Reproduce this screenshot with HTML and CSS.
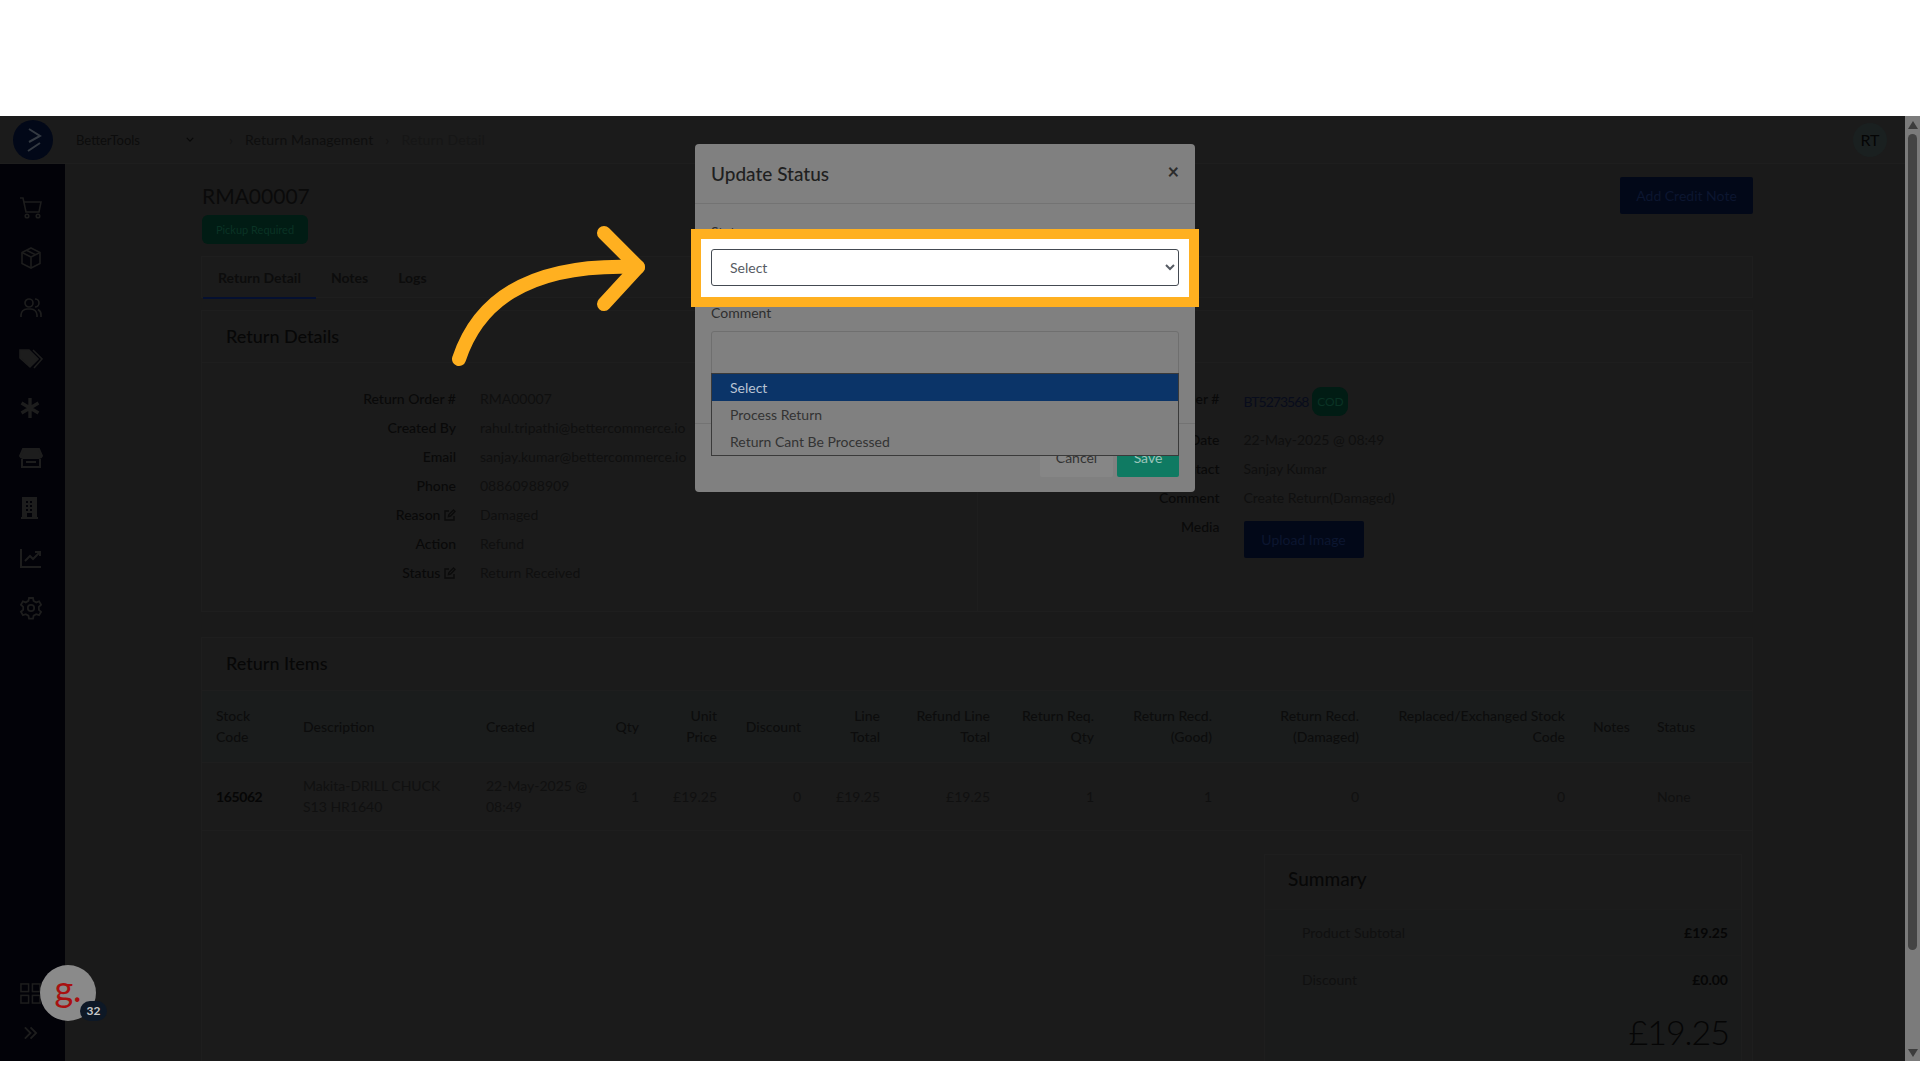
FILE: index.html
```html
<!DOCTYPE html>
<html lang="en">

<head>
    <meta charset="UTF-8">
    <meta name="viewport" content="width=device-width, initial-scale=1.0">
    <title>Return Detail</title>
    <link rel="stylesheet" href="styles.css">
</head>

<body>
    <div class="band-top"></div>

    <div class="app">
        <div class="page">
            <!-- Top bar -->
            <header class="topbar">
                <div class="logo">
                    <svg viewBox="0 0 40 40" width="40" height="40" fill="none" stroke="#343a42" stroke-width="2">
                        <path d="M16 9l11 7-11 6" />
                        <path d="M27 23l-12 8" />
                    </svg>
                </div>
                <div class="store-select">
                    <span>BetterTools</span>
                    <svg viewBox="0 0 10 6" width="8" height="5" fill="none" stroke="#0a0a0a" stroke-width="1.6">
                        <path d="M1 1l4 4 4-4" />
                    </svg>
                </div>
                <nav class="crumbs">
                    <span class="crumb-sep">›</span>
                    <span>Return Management</span>
                    <span class="crumb-sep">›</span>
                    <span class="crumb-current">Return Detail</span>
                </nav>
                <div class="avatar">RT</div>
            </header>

            <div class="workspace">
                <!-- Sidebar -->
                <aside class="sidebar">
                    <svg class="side-icon" viewBox="0 0 24 24" fill="none" stroke-width="1.6">
                        <path d="M1 2h3l3 14h13l2-10H5" />
                        <circle cx="8" cy="20" r="1.8" />
                        <circle cx="19" cy="20" r="1.8" />
                    </svg>
                    <svg class="side-icon" viewBox="0 0 24 24" fill="none" stroke-width="1.6">
                        <path d="M12 2l9 4.500v11L12 22l-9-4.500v-11z" />
                        <path d="M3 6.500l9 4.500 9-4.500M12 11v11M7.500 4.200l9 4.600" />
                    </svg>
                    <svg class="side-icon" viewBox="0 0 24 24" fill="none" stroke-width="1.7">
                        <circle cx="10" cy="7" r="4" />
                        <path d="M2 21v-2a6 6 0 0 1 6-6h4a6 6 0 0 1 6 6v2M16 3a4 4 0 0 1 0 8M19 13.500a6 6 0 0 1 3 5.500v2" />
                    </svg>
                    <svg class="side-icon icon-tags" viewBox="0 0 24 24" fill="none" stroke-width="1.6">
                        <path class="solid" d="M1 3h9l9 9-8 8-10-9z" />
                        <path d="M14 3l9 9-8 9" />
                    </svg>
                    <svg class="side-icon" viewBox="0 0 24 24" fill="none" stroke-width="3.4">
                        <path d="M11 2v20M2.500 7l17 10M19.500 7l-17 10" />
                    </svg>
                    <svg class="side-icon" viewBox="0 0 24 24" fill="none" stroke-width="2">
                        <path class="solid" d="M4 3h16l3 7a3 3 0 0 1-3 2H4a3 3 0 0 1-3-2z" />
                        <path d="M3 13v8h18v-8M7 16h10" />
                    </svg>
                    <svg class="side-icon" viewBox="0 0 24 24" stroke-width="0">
                        <path class="solid" fill-rule="evenodd" d="M3 1h15v20h1v2H2v-2h1zM7 5v2h2V5zm4 0v2h2V5zM7 9v2h2V9zm4 0v2h2V9zm-4 4v2h2v-2zm4 0v2h2v-2zm-3 4v4h5v-4z" />
                    </svg>
                    <svg class="side-icon" viewBox="0 0 24 24" fill="none" stroke-width="2">
                        <path d="M2 3v18h20M6 15l5-5 3 3 6-6M16 6h5v4" />
                    </svg>
                    <svg class="side-icon" viewBox="0 0 24 24" fill="none" stroke-width="1.8">
                        <circle cx="12" cy="12" r="3.200" />
                        <path d="M10 2h4l.6 3 2.600 1.400 2.900-1 2 3.400-2.300 2 .1 3 2.200 2-2 3.400-2.900-1-2.600 1.500-.6 2.900h-4l-.6-3-2.600-1.400-2.900 1-2-3.400 2.300-2v-3l-2.300-2 2-3.400 2.900 1 2.600-1.500z" />
                    </svg>
                    <div class="side-bottom">
                        <svg class="grid-icon" viewBox="0 0 22 22" fill="none" stroke-width="1.6">
                            <rect x="1" y="1" width="8" height="8" />
                            <rect x="13" y="1" width="8" height="8" />
                            <rect x="1" y="13" width="8" height="8" />
                            <rect x="13" y="13" width="8" height="8" />
                        </svg>
                        <svg class="expand-icon" viewBox="0 0 16 14" fill="none" stroke-width="2">
                            <path d="M2 1l6 6-6 6M8 1l6 6-6 6" />
                        </svg>
                    </div>
                </aside>

                <!-- Main content -->
                <main class="content">
                    <div class="page-head">
                        <div class="page-title">
                            <h1>RMA00007</h1>
                            <span class="status-pill">Pickup Required</span>
                        </div>
                        <button class="btn-navy btn-credit">Add Credit Note</button>
                    </div>

                    <div class="card tabs">
                        <span class="tab tab-active">Return Detail</span>
                        <span class="tab">Notes</span>
                        <span class="tab">Logs</span>
                    </div>

                    <section class="card details">
                        <h2 class="card-title">Return Details</h2>
                        <div class="details-body">
                            <dl class="detail-col col-left">
                                <div class="detail-row"><dt>Return Order #</dt><dd>RMA00007</dd></div>
                                <div class="detail-row"><dt>Created By</dt><dd>rahul.tripathi@bettercommerce.io</dd></div>
                                <div class="detail-row"><dt>Email</dt><dd>sanjay.kumar@bettercommerce.io</dd></div>
                                <div class="detail-row"><dt>Phone</dt><dd>08860988909</dd></div>
                                <div class="detail-row"><dt>Reason <svg class="edit-icon" viewBox="0 0 12 12" fill="none" stroke-width="1.4"><path d="M10 7v4H1V2h4M4.500 7.500l.4-2L9.500 1l1.500 1.500L6.500 7z" /></svg></dt><dd>Damaged</dd></div>
                                <div class="detail-row"><dt>Action</dt><dd>Refund</dd></div>
                                <div class="detail-row"><dt>Status <svg class="edit-icon" viewBox="0 0 12 12" fill="none" stroke-width="1.4"><path d="M10 7v4H1V2h4M4.500 7.500l.4-2L9.500 1l1.500 1.500L6.500 7z" /></svg></dt><dd>Return Received</dd></div>
                            </dl>
                            <dl class="detail-col col-right">
                                <div class="detail-row row-order"><dt>Order #</dt><dd><span class="order-link">BT5273568</span><span class="cod-pill">COD</span></dd></div>
                                <div class="detail-row"><dt>Date</dt><dd>22-May-2025 @ 08:49</dd></div>
                                <div class="detail-row"><dt>Contact</dt><dd>Sanjay Kumar</dd></div>
                                <div class="detail-row"><dt>Comment</dt><dd>Create Return(Damaged)</dd></div>
                                <div class="detail-row"><dt>Media</dt><dd><button class="btn-navy btn-upload">Upload Image</button></dd></div>
                            </dl>
                        </div>
                    </section>

                    <section class="card items">
                        <h2 class="card-title">Return Items</h2>
                        <table class="items-table">
                            <thead>
                                <tr>
                                    <th>Stock Code</th>
                                    <th>Description</th>
                                    <th>Created</th>
                                    <th class="num">Qty</th>
                                    <th class="num">Unit Price</th>
                                    <th class="num">Discount</th>
                                    <th class="num">Line Total</th>
                                    <th class="num">Refund Line Total</th>
                                    <th class="num">Return Req. Qty</th>
                                    <th class="num">Return Recd. (Good)</th>
                                    <th class="num">Return Recd. (Damaged)</th>
                                    <th class="num">Replaced/Exchanged Stock Code</th>
                                    <th>Notes</th>
                                    <th>Status</th>
                                </tr>
                            </thead>
                            <tbody>
                                <tr>
                                    <td class="code">165062</td>
                                    <td>Makita-DRILL CHUCK S13 HR1640</td>
                                    <td class="created">22-May-2025 @<br>08:49</td>
                                    <td class="num">1</td>
                                    <td class="num">£19.25</td>
                                    <td class="num">0</td>
                                    <td class="num">£19.25</td>
                                    <td class="num">£19.25</td>
                                    <td class="num">1</td>
                                    <td class="num">1</td>
                                    <td class="num">0</td>
                                    <td class="num">0</td>
                                    <td></td>
                                    <td>None</td>
                                </tr>
                            </tbody>
                        </table>

                        <div class="card summary">
                            <h2 class="summary-title">Summary</h2>
                            <div class="summary-row"><span>Product Subtotal</span><b>£19.25</b></div>
                            <div class="summary-row row-last"><span>Discount</span><b>£0.00</b></div>
                            <div class="summary-total">£19.25</div>
                        </div>
                    </section>
                </main>
            </div>
        </div>

        <!-- Scrollbar -->
        <div class="scrollbar">
            <span class="arrow-up"></span>
            <span class="thumb"></span>
            <span class="arrow-down"></span>
        </div>

        <!-- Chat widget -->
        <div class="widget">
            <span class="widget-g">g.</span>
            <span class="widget-count">32</span>
        </div>

        <!-- Update status modal -->
        <div class="modal">
            <div class="modal-head">
                <h3>Update Status</h3>
                <span class="modal-close">×</span>
            </div>
            <div class="modal-body">
                <div class="focus-box"></div>
                <label class="field-label">Status</label>
                <select class="status-select">
                    <option>Select</option>
                    <option>Process Return</option>
                    <option>Return Cant Be Processed</option>
                </select>
                <label class="field-label label-comment">Comment</label>
                <textarea class="comment-box"></textarea>
                <div class="option-list">
                    <div class="option option-active">Select</div>
                    <div class="option">Process Return</div>
                    <div class="option">Return Cant Be Processed</div>
                </div>
            </div>
            <div class="modal-foot">
                <button class="btn-cancel">Cancel</button>
                <button class="btn-save">Save</button>
            </div>
        </div>

        <!-- Callout arrow -->
        <svg class="callout" viewBox="0 0 220 160" fill="none" stroke="#ffb020" stroke-width="14" stroke-linecap="round" stroke-linejoin="round">
            <path d="M19 139C36 88 80 42 198 47" />
            <path d="M164 13l34 34-34 37" />
        </svg>
    </div>
</body>

</html>
```

FILE: styles.css
```css
* {
    margin: 0;
    padding: 0;
    box-sizing: border-box;
    font-family: Lato, 'Open Sans', sans-serif;
}

body {
    background-color: white;
    overflow: hidden;
}

.band-top {
    height: 116px;
}

.app {
    position: relative;
    display: flex;
    height: 945px;
    background-color: #1a1a1a;
    overflow: hidden;
}

.page {
    flex: 1;
    min-width: 0;
    display: flex;
    flex-direction: column;
}

/* Top bar */
.topbar {
    height: 48px;
    flex-shrink: 0;
    display: flex;
    align-items: center;
    background-color: #1b1b1b;
    border-bottom: 1px solid #1e1e1e;
    padding-left: 13px;
    padding-right: 18px;
}

.logo {
    width: 40px;
    height: 40px;
    border-radius: 50%;
    background-color: #020818;
}

.store-select {
    width: 118px;
    margin-left: 23px;
    display: flex;
    justify-content: space-between;
    align-items: center;
    font-size: 13px;
    color: #0c0c0c;
}

.crumbs {
    flex: 1;
    display: flex;
    align-items: center;
    gap: 12px;
    margin-left: 35px;
    font-size: 14px;
    letter-spacing: 0.15px;
    color: #0e0e0e;
}

.crumb-sep {
    color: #131313;
}

.crumb-current {
    color: #161616;
}

.avatar {
    width: 34px;
    height: 34px;
    border-radius: 50%;
    background-color: #1a2020;
    color: #050505;
    font-size: 16px;
    line-height: 34px;
    text-align: center;
}

.workspace {
    flex: 1;
    min-height: 0;
    display: flex;
}

/* Sidebar */
.sidebar {
    width: 65px;
    flex-shrink: 0;
    position: relative;
    background-color: #020208;
    padding-top: 32px;
    padding-left: 19px;
    display: flex;
    flex-direction: column;
    gap: 26px;
}

.side-icon {
    width: 24px;
    height: 24px;
    stroke: #1d1d1d;
}

.side-icon .solid {
    fill: #1d1d1d;
}

.icon-tags {
    transform: translateY(1px);
}

.side-bottom {
    position: absolute;
    left: 20px;
    bottom: 21px;
    display: flex;
    flex-direction: column;
    gap: 22px;
}

.grid-icon {
    width: 21px;
    height: 21px;
    stroke: #1d1d1d;
}

.expand-icon {
    width: 15px;
    height: 14px;
    margin-left: 3px;
    stroke: #1d1d1d;
}

/* Main content */
.content {
    flex: 1;
    min-width: 0;
    padding: 13px 152px 0 136px;
    overflow: hidden;
}

.page-head {
    display: flex;
    justify-content: space-between;
    align-items: flex-start;
    padding-left: 1px;
}

.page-title h1 {
    font-size: 21px;
    font-weight: 400;
    line-height: 30px;
    margin-top: 4px;
    margin-bottom: 4px;
    color: #0a0a0a;
}

.status-pill {
    display: block;
    width: 106px;
    height: 29px;
    border-radius: 6px;
    background-color: #011c14;
    color: #0a3325;
    font-size: 11px;
    line-height: 29px;
    text-align: center;
}

.btn-navy {
    border: none;
    border-radius: 2px;
    background-color: #020818;
    color: #0c1630;
    font-size: 14px;
}

.btn-credit {
    width: 133px;
    height: 37px;
}

.card {
    background-color: #1b1b1b;
    border: 1px solid #1e1e1e;
}

.tabs {
    height: 42px;
    margin-top: 12px;
    display: flex;
    padding-left: 1px;
}

.tab {
    padding: 0 15px;
    line-height: 42px;
    font-size: 14px;
    font-weight: 700;
    color: #0c0c0c;
}

.tab-active {
    height: 42px;
    border-bottom: 2px solid #051030;
}

.details {
    height: 302px;
    margin-top: 12px;
}

.card-title {
    height: 52px;
    padding-left: 24px;
    font-size: 18px;
    font-weight: 500;
    line-height: 50px;
    color: #070707;
    border-bottom: 1px solid #1e1e1e;
}

.details-body {
    display: flex;
    padding-top: 21px;
    height: 248px;
}

.detail-col {
    flex: 1;
    font-size: 14px;
}

.col-left {
    --label-width: 254px;
    border-right: 1px solid #1e1e1e;
}

.col-right {
    --label-width: 242px;
}

.detail-row {
    display: flex;
    gap: 24px;
    height: 29px;
    line-height: 29px;
}

.detail-row dt {
    width: var(--label-width);
    flex-shrink: 0;
    text-align: right;
    font-weight: 500;
    color: #090909;
}

.detail-row dd {
    color: #0f0f0f;
    white-space: nowrap;
}

.row-order {
    height: 41px;
}

.row-order dd {
    display: flex;
    gap: 4px;
    align-items: flex-start;
    padding-top: 3px;
}

.order-link {
    letter-spacing: -1px;
    color: #080c1c;
}

.cod-pill {
    width: 36px;
    height: 29px;
    border-radius: 9px;
    background-color: #011c14;
    color: #0a3325;
    font-size: 12px;
    text-align: center;
}

.btn-upload {
    display: block;
    width: 120px;
    height: 37px;
    margin-top: 9px;
}

.edit-icon {
    width: 12px;
    height: 12px;
    stroke: #0b0b0b;
    vertical-align: -1px;
}

.items {
    margin-top: 25px;
    height: 500px;
}

.items .card-title {
    height: 53px;
}

.items-table {
    width: 100%;
    table-layout: fixed;
    border-collapse: collapse;
    font-size: 14px;
    line-height: 21px;
    color: #101010;
}

.items-table th,
.items-table td {
    padding: 0 14px;
    text-align: left;
    vertical-align: middle;
}

.items-table th {
    height: 71px;
    font-weight: 500;
    color: #0c0c0c;
    background-color: #1a1c1c;
    border-bottom: 1px solid #1e1e1e;
}

.items-table td {
    height: 68px;
    border-bottom: 1px solid #1e1e1e;
}

.items-table .num {
    text-align: right;
}

.items-table .code {
    font-weight: 700;
    letter-spacing: -0.4px;
    color: #060606;
}

.items-table .created {
    white-space: nowrap;
}

.items-table th:nth-child(1) { width: 87px; }
.items-table th:nth-child(2) { width: 183px; }
.items-table th:nth-child(3) { width: 128px; }
.items-table th:nth-child(4) { width: 53px; }
.items-table th:nth-child(5) { width: 78px; }
.items-table th:nth-child(6) { width: 84px; }
.items-table th:nth-child(7) { width: 79px; }
.items-table th:nth-child(8) { width: 110px; }
.items-table th:nth-child(9) { width: 104px; }
.items-table th:nth-child(10) { width: 118px; }
.items-table th:nth-child(11) { width: 147px; }
.items-table th:nth-child(12) { width: 206px; }
.items-table th:nth-child(13) { width: 64px; }
.items-table th:nth-child(14) { width: 109px; }

.summary {
    width: 478px;
    margin: 23px 10px 0 auto;
    height: 220px;
    background-color: #1a1b1b;
}

.summary-title {
    height: 55px;
    padding-left: 23px;
    font-size: 19px;
    font-weight: 500;
    line-height: 48px;
    color: #070707;
    background-color: #1b1b1b;
    border-bottom: 1px solid #1c1c1c;
}

.summary-row {
    height: 46px;
    display: flex;
    justify-content: space-between;
    align-items: center;
    padding: 0 13px 0 37px;
    font-size: 14px;
    color: #101010;
    border-bottom: 1px solid #1c1c1c;
}

.summary-row b {
    font-weight: 700;
    color: #060606;
}

.row-last {
    padding-top: 2px;
    border-bottom: none;
}

.summary-total {
    margin-top: 5px;
    padding-right: 12px;
    text-align: right;
    font-size: 34px;
    font-weight: 300;
    letter-spacing: -1px;
    line-height: 50px;
    color: #050505;
}

/* Scrollbar */
.scrollbar {
    width: 15px;
    flex-shrink: 0;
    display: flex;
    flex-direction: column;
    align-items: center;
    background-color: #7b7b7b;
    padding: 5px 0 4px;
}

.arrow-up {
    border-left: 5px solid transparent;
    border-right: 5px solid transparent;
    border-bottom: 8px solid #3c3c3c;
}

.arrow-down {
    border-left: 5px solid transparent;
    border-right: 5px solid transparent;
    border-top: 8px solid #3c3c3c;
    margin-top: auto;
}

.thumb {
    width: 9px;
    height: 816px;
    margin-top: 5px;
    border-radius: 5px;
    background-color: #444;
}

/* Chat widget */
.widget {
    position: absolute;
    left: 40px;
    top: 849px;
    width: 56px;
    height: 56px;
    border-radius: 50%;
    background-color: #8a8a8a;
    text-align: center;
}

.widget-g {
    font-size: 36px;
    line-height: 46px;
    color: #a81010;
}

.widget-count {
    position: absolute;
    left: 40px;
    top: 36px;
    width: 27px;
    height: 20px;
    border-radius: 10px;
    background-color: #0d1826;
    color: #c8c8c8;
    font-size: 12px;
    font-weight: 700;
    line-height: 20px;
}

/* Modal */
.modal {
    position: absolute;
    left: 695px;
    top: 28px;
    width: 500px;
    height: 348px;
    border-radius: 4px;
    background-color: #808080;
}

.modal-head {
    height: 60px;
    display: flex;
    justify-content: space-between;
    align-items: center;
    padding: 0 16px;
    border-bottom: 1px solid #737373;
}

.modal-head h3 {
    font-size: 19px;
    font-weight: 500;
    color: #1f1f1f;
}

.modal-close {
    padding-bottom: 5px;
    font-size: 20px;
    font-weight: 700;
    color: #2c2c2c;
}

.modal-body {
    position: relative;
    height: 219px;
    padding: 18px 16px 0;
}

.field-label {
    display: block;
    font-size: 14px;
    line-height: 20px;
    color: #2e2e2e;
}

.focus-box {
    position: absolute;
    left: -4px;
    right: -4px;
    top: 25px;
    height: 78px;
    z-index: 1;
    background-color: white;
    border: 10px solid #ffb020;
}

.status-select {
    position: relative;
    z-index: 2;
    display: block;
    width: 100%;
    height: 37px;
    margin-top: 7px;
    padding-left: 14px;
    border: 1px solid #444a52;
    border-radius: 3px;
    background-color: white;
    color: #565b63;
    font-size: 14px;
}

.label-comment {
    margin-top: 17px;
}

.comment-box {
    display: block;
    width: 100%;
    height: 76px;
    margin-top: 8px;
    border: 1px solid #6f6f6f;
    border-radius: 3px;
    background-color: #808080;
    resize: none;
}

.option-list {
    position: absolute;
    left: 16px;
    right: 16px;
    top: 169px;
    z-index: 2;
    border: 1px solid #3a3a3a;
    background-color: #808080;
    font-size: 14px;
}

.option {
    height: 27px;
    line-height: 27px;
    padding-left: 18px;
    color: #333;
}

.option-active {
    background-color: #0b3468;
    color: #b9c3d3;
}

.modal-foot {
    height: 69px;
    display: flex;
    justify-content: flex-end;
    align-items: flex-start;
    gap: 4px;
    padding: 16px 16px 0;
    border-top: 1px solid #737373;
}

.btn-cancel,
.btn-save {
    height: 37px;
    padding-bottom: 2px;
    border: none;
    border-radius: 2px;
    font-size: 14px;
}

.btn-cancel {
    width: 73px;
    background-color: #868686;
    color: #333;
}

.btn-save {
    width: 62px;
    background-color: #0f7a62;
    color: #9cc5ba;
}

/* Callout */
.callout {
    position: absolute;
    left: 440px;
    top: 104px;
    width: 220px;
    height: 160px;
}
```
